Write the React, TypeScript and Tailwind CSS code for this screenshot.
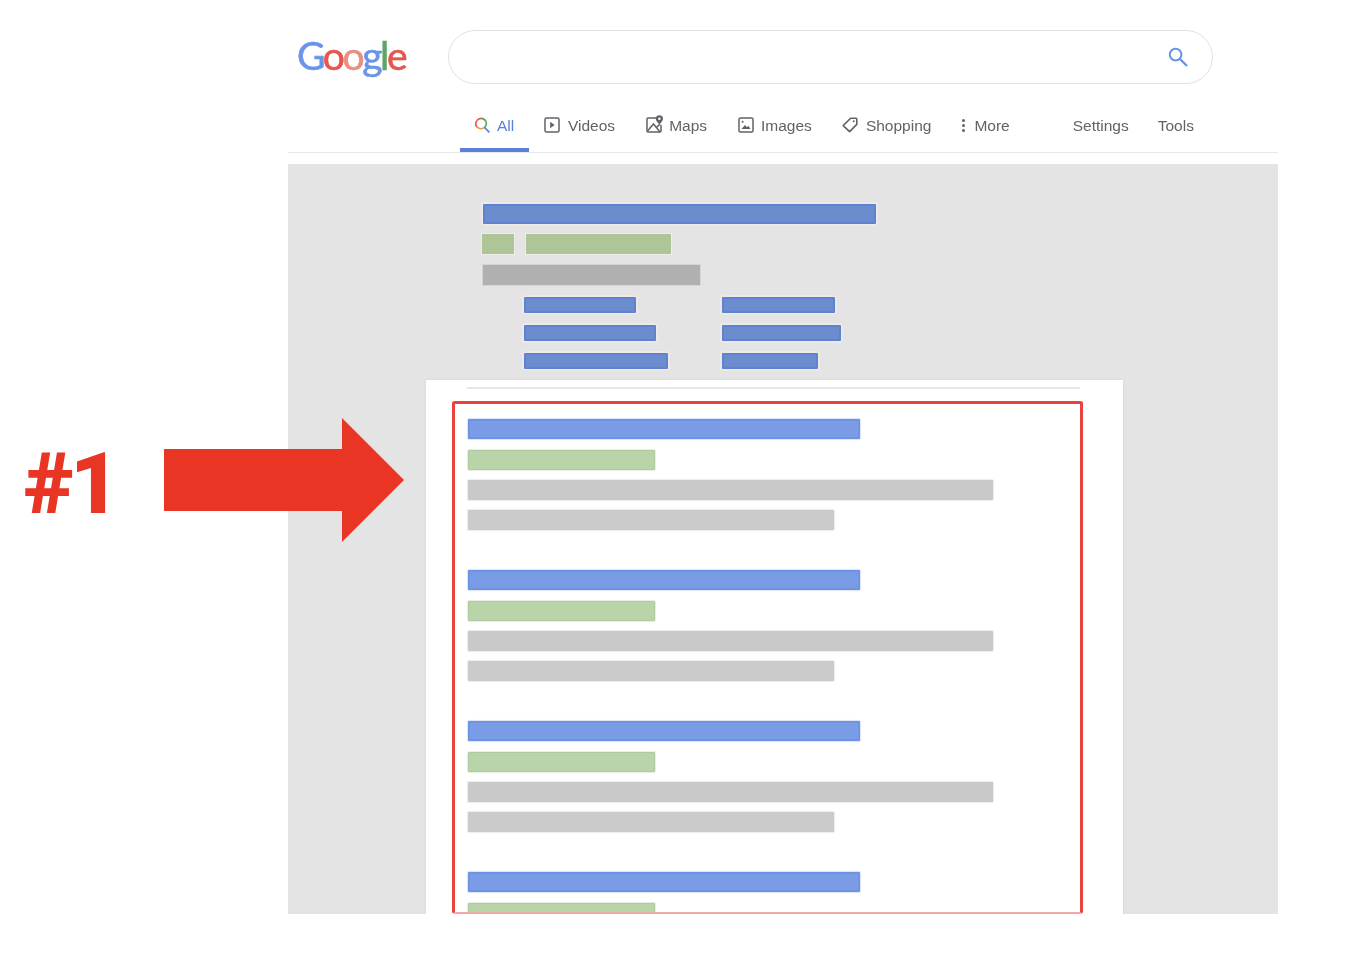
import React from 'react';

const tabIcon = 'w-4 h-4 text-[#5f6368] -mt-px';

const Bar: React.FC<{ width: number; className: string }> = ({ width, className }) => (
  <div className={`rounded-[1px] blur-[0.4px] ${className}`} style={{ width }} />
);

const topBlue = 'h-5 border-2 border-[#5f83d2] bg-[#6c8dcd] shadow-[0_0_0_2px_#ece9e6]';
const linkBlue = 'h-4 border-2 border-[#5f83d2] bg-[#6c8dcd] shadow-[0_0_0_2px_#ece9e6]';

const Result: React.FC = () => (
  <div className="flex flex-col gap-2.5 mb-[40px]">
    <Bar width={392} className="h-5 mb-px border-2 border-[#6e93e6] bg-[#7a9ce6] shadow-[0_0_1px_1px_#dde3f0]" />
    <Bar width={187} className="h-5 border border-[#aecb9f] bg-[#b9d4a8] shadow-[0_0_1px_1px_#e8eee3]" />
    <Bar width={525} className="h-5 bg-[#c9c9c9] shadow-[0_0_1px_1px_#ececec]" />
    <Bar width={366} className="h-5 bg-[#cbcbcb] shadow-[0_0_1px_1px_#ececec]" />
  </div>
);

const App: React.FC = () => {
  return (
    <div className="relative w-[1348px] h-[954px] bg-white overflow-hidden font-[family-name:Liberation_Sans,sans-serif]">
      <div className="ml-[288px] w-[990px]">
        {/* header */}
        <div className="h-[103px] pt-[30px] flex items-start">
          <div className="w-[160px] h-[54px] pl-[9px] flex items-center">
            <span className="[font-family:Lato,sans-serif] text-[39px] leading-none tracking-[-2.4px] [-webkit-text-stroke:0.6px] blur-[0.4px] -mt-1">
              <span className="text-[#6a94e8]">G</span>
              <span className="text-[#e4574c]">o</span>
              <span className="text-[#ea8f80]">o</span>
              <span className="text-[#6a94e8]">g</span>
              <span className="text-[#5da566]">l</span>
              <span className="text-[#e4574c]">e</span>
            </span>
          </div>
          <div className="w-[765px] h-[54px] rounded-full border border-[#dfe1e5] flex items-center justify-end pr-6">
            <svg viewBox="0 0 20 20" className="w-5 h-5 text-[#6b93e0] blur-[0.3px]" fill="none" stroke="currentColor" strokeWidth="2">
              <circle cx="7.6" cy="7.6" r="5.8" />
              <path d="M12 12 19 19" strokeWidth="2.4" />
            </svg>
          </div>
        </div>

        {/* tabs */}
        <div className="h-[50px] border-b border-[#e8e8e8] pl-[172px] flex text-[15.5px] text-[#5f6368]">
          <div className="w-[69px] h-[49px] flex items-center pl-3.5 gap-[7px] text-[#5b80d8] border-b-4 border-[#5b80d8]">
            <svg viewBox="0 0 16 16" className="w-4 h-4 shrink-0 -mt-px blur-[0.3px]" fill="none" strokeWidth="1.6">
              <path d="M3 3.4A5.4 5.4 0 0 1 7 1.4" stroke="#e4574c" />
              <path d="M7 1.4a5.4 5.4 0 0 1 5 3.2" stroke="#5da566" />
              <path d="M12 4.6a5.4 5.4 0 0 1-1.6 5.8" stroke="#5da566" />
              <path d="M3 3.4a5.4 5.4 0 0 0 .2 6.8" stroke="#e4574c" />
              <path d="M3.2 10.2a5.4 5.4 0 0 0 7.2.2" stroke="#e9a03f" />
              <path d="M10.4 10.4 15.4 15.4" stroke="#5b80d8" />
            </svg>
            <span className="blur-[0.3px]">All</span>
          </div>

          <div className="ml-[15px] h-[45px] flex items-center gap-2 blur-[0.3px]">
            <svg viewBox="0 0 16 16" className={tabIcon} fill="none" stroke="currentColor" strokeWidth="1.5">
              <rect x="1" y="1" width="14" height="14" rx="1.5" />
              <path d="M6.2 4.8 10.6 8l-4.4 3.2z" fill="currentColor" stroke="none" />
            </svg>
            <span>Videos</span>
          </div>

          <div className="ml-[31px] h-[45px] flex items-center gap-[5px] blur-[0.3px]">
            <svg viewBox="0 0 18 18" className="w-[18px] h-[18px] text-[#5f6368] -mt-1" fill="none" stroke="currentColor" strokeWidth="1.5">
              <path d="M10 3H2a1 1 0 0 0-1 1v12a1 1 0 0 0 1 1h12a1 1 0 0 0 1-1v-6" />
              <path d="M1.5 16 7.5 9l6.5 8" />
              <path d="M10.5 12.6 14 9" />
              <path d="M13.4 .2a3.6 3.6 0 0 0-3.6 3.6c0 2.4 3.6 5.6 3.6 5.6s3.6-3.2 3.6-5.6A3.6 3.6 0 0 0 13.4.2z" fill="currentColor" stroke="none" />
              <circle cx="13.4" cy="3.8" r="1.2" fill="#fff" stroke="none" />
            </svg>
            <span>Maps</span>
          </div>

          <div className="ml-[31px] h-[45px] flex items-center gap-[7px] blur-[0.3px]">
            <svg viewBox="0 0 16 16" className={tabIcon} fill="none" stroke="currentColor" strokeWidth="1.5">
              <rect x="1" y="1" width="14" height="14" rx="1.5" />
              <circle cx="4.6" cy="4.8" r="1" fill="currentColor" stroke="none" />
              <path d="M3.5 12 7 8l2 2.2 1.4-1.4 2.1 3.2z" fill="currentColor" stroke="none" />
            </svg>
            <span>Images</span>
          </div>

          <div className="ml-[30px] h-[45px] flex items-center gap-2 blur-[0.3px]">
            <svg viewBox="0 0 16 16" className={tabIcon} fill="none" stroke="currentColor" strokeWidth="1.6">
              <path d="M8.6 1.2H14a.8.8 0 0 1 .8.8v5.4L7.6 14.6 1.2 8.6z" strokeLinejoin="round" />
              <circle cx="11.8" cy="4.2" r="1" fill="currentColor" stroke="none" />
            </svg>
            <span>Shopping</span>
          </div>

          <div className="ml-[31px] h-[45px] flex items-center gap-[9px] blur-[0.3px]">
            <div className="w-[3px] flex flex-col gap-[2px]">
              <div className="w-[3px] h-[3px] rounded-full bg-[#5f6368]" />
              <div className="w-[3px] h-[3px] rounded-full bg-[#5f6368]" />
              <div className="w-[3px] h-[3px] rounded-full bg-[#5f6368]" />
            </div>
            <span>More</span>
          </div>

          <div className="ml-[63px] h-[45px] flex items-center blur-[0.3px]">Settings</div>
          <div className="ml-[29px] h-[45px] flex items-center blur-[0.3px]">Tools</div>
        </div>

        {/* blurred serp panel */}
        <div className="mt-[11px] h-[750px] bg-[#e4e4e4] overflow-hidden pt-10">
          <div className="ml-[195px]">
            <Bar width={393} className={topBlue} />
            <div className="mt-2.5 flex h-5">
              <div className="w-[32px] -ml-px h-5 bg-[#adc597] shadow-[0_0_0_1px_#eeeee8] blur-[0.4px]" />
              <div className="ml-3 w-[145px] h-5 bg-[#adc597] shadow-[0_0_0_1px_#eeeee8] blur-[0.4px]" />
            </div>
            <div className="mt-[11px] w-[217px] h-5 bg-[#b0b0b0] shadow-[0_0_0_1px_#d5d5d5] blur-[0.4px]" />
            <div className="mt-3 ml-[41px] grid grid-cols-[198px_1fr] gap-y-3">
              <Bar width={112} className={linkBlue} />
              <Bar width={113} className={linkBlue} />
              <Bar width={132} className={linkBlue} />
              <Bar width={119} className={linkBlue} />
              <Bar width={144} className={linkBlue} />
              <Bar width={96} className={linkBlue} />
            </div>
          </div>

          <div className="mt-[11px] ml-[138px] w-[697px] h-[560px] bg-white pt-[7px] shadow-[0_0_2px_#d4d4dc]">
            <div className="ml-[41px] w-[613px] h-0.5 bg-[#e6e6e6]" />
            <div className="mt-[12px] ml-[26px] w-[631px] h-[513px] rounded-[3px] border-[3px] border-b-2 border-[#e8443e] border-b-[#f2a8a4] pt-[15px] pl-[13px] overflow-hidden blur-[0.2px]">
              <Result />
              <Result />
              <Result />
              <Result />
            </div>
          </div>
        </div>
      </div>

      {/* callout */}
      <div className="absolute left-[24px] top-[434px] [font-family:Roboto,sans-serif] text-[86px] leading-[100px] font-black text-[#e83524] tracking-[-4px]">#1</div>
      <svg className="absolute left-[164px] top-[418px]" width="240" height="124" viewBox="0 0 240 124">
        <path d="M0 31H178V0L240 62 178 124V93H0z" fill="#e83524" />
      </svg>
    </div>
  );
};

export default App;
